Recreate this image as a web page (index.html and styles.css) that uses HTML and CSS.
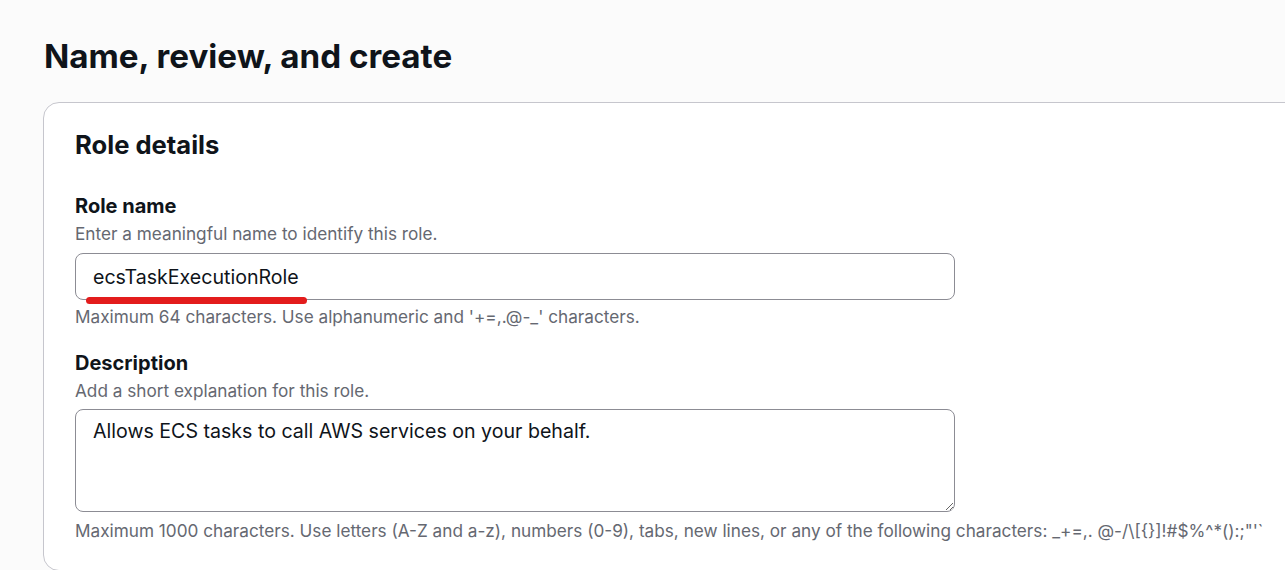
FILE: index.html
```html
<!DOCTYPE html>
<html>
<head>
<meta charset="utf-8">
<link rel="stylesheet" href="styles.css">
</head>
<body>
<div class="page">
  <h1 class="title">Name, review, and create</h1>
  <section class="card">
    <h2 class="card-title">Role details</h2>
    <div class="field">
      <div class="label">Role name</div>
      <div class="desc">Enter a meaningful name to identify this role.</div>
      <div class="control-wrap">
        <input class="input" type="text" value="ecsTaskExecutionRole" readonly>
        <span class="annot"></span>
      </div>
      <div class="hint">Maximum 64 characters. Use alphanumeric and '+=,.@-_' characters.</div>
    </div>
    <div class="field field-2">
      <div class="label">Description</div>
      <div class="desc">Add a short explanation for this role.</div>
      <textarea class="textarea" readonly>Allows ECS tasks to call AWS services on your behalf.</textarea>
      <div class="hint hint-2">Maximum 1000 characters. Use letters (A-Z and a-z), numbers (0-9), tabs, new lines, or any of the following characters: _+=,. @-/\[{}]!#$%^*():;"'`</div>
    </div>
  </section>
</div>
</body>
</html>
```

FILE: styles.css
```css
html, body {
  margin: 0;
  padding: 0;
  background: #fbfbfb;
  overflow: hidden;
}
body {
  font-family: Inter, Roboto, "Liberation Sans", sans-serif;
  color: #0f141a;
}
.page {
  padding: 36px 0 0 43px;
  width: 1300px;
}
.title {
  margin: 0;
  font-size: 33.2px;
  line-height: 40px;
  font-weight: 700;
  padding-left: 1px;
}
.card {
  margin-top: 26px;
  background: #fff;
  border: 1px solid #c6c6cd;
  border-radius: 16px;
  padding: 26px 31px 0 31px;
  height: 469px;
  box-sizing: border-box;
}
.card-title {
  margin: 0;
  font-size: 25.6px;
  line-height: 32px;
  font-weight: 700;
}
.field {
  margin-top: 33px;
}
.field-2 {
  margin-top: 23px;
}
.label {
  font-size: 20px;
  line-height: 24px;
  font-weight: 700;
}
.desc {
  margin-top: 5px;
  font-size: 17.2px;
  line-height: 22px;
  color: #656871;
}
.control-wrap {
  position: relative;
  width: 880px;
  margin-top: 8px;
}
.input {
  display: block;
  box-sizing: border-box;
  width: 880px;
  height: 47px;
  border: 1px solid #8c8c94;
  border-radius: 8px;
  padding: 0 17px;
  font-family: inherit;
  font-size: 19.6px;
  color: #0f141a;
  background: #fff;
  outline: none;
}
.annot {
  position: absolute;
  left: 11px;
  top: 44px;
  width: 221px;
  height: 7px;
  border-radius: 4px;
  background: #e31c1c;
}
.hint {
  margin-top: 6px;
  font-size: 17.2px;
  line-height: 22px;
  color: #656871;
}
.textarea {
  display: block;
  box-sizing: border-box;
  width: 880px;
  height: 103px;
  margin-top: 7px;
  border: 1px solid #8c8c94;
  border-radius: 8px;
  padding: 9px 17px;
  font-family: inherit;
  font-size: 19.6px;
  line-height: 24px;
  color: #0f141a;
  background: #fff;
  outline: none;
  resize: vertical;
}
.hint-2 {
  margin-top: 8px;
  white-space: nowrap;
}
```
